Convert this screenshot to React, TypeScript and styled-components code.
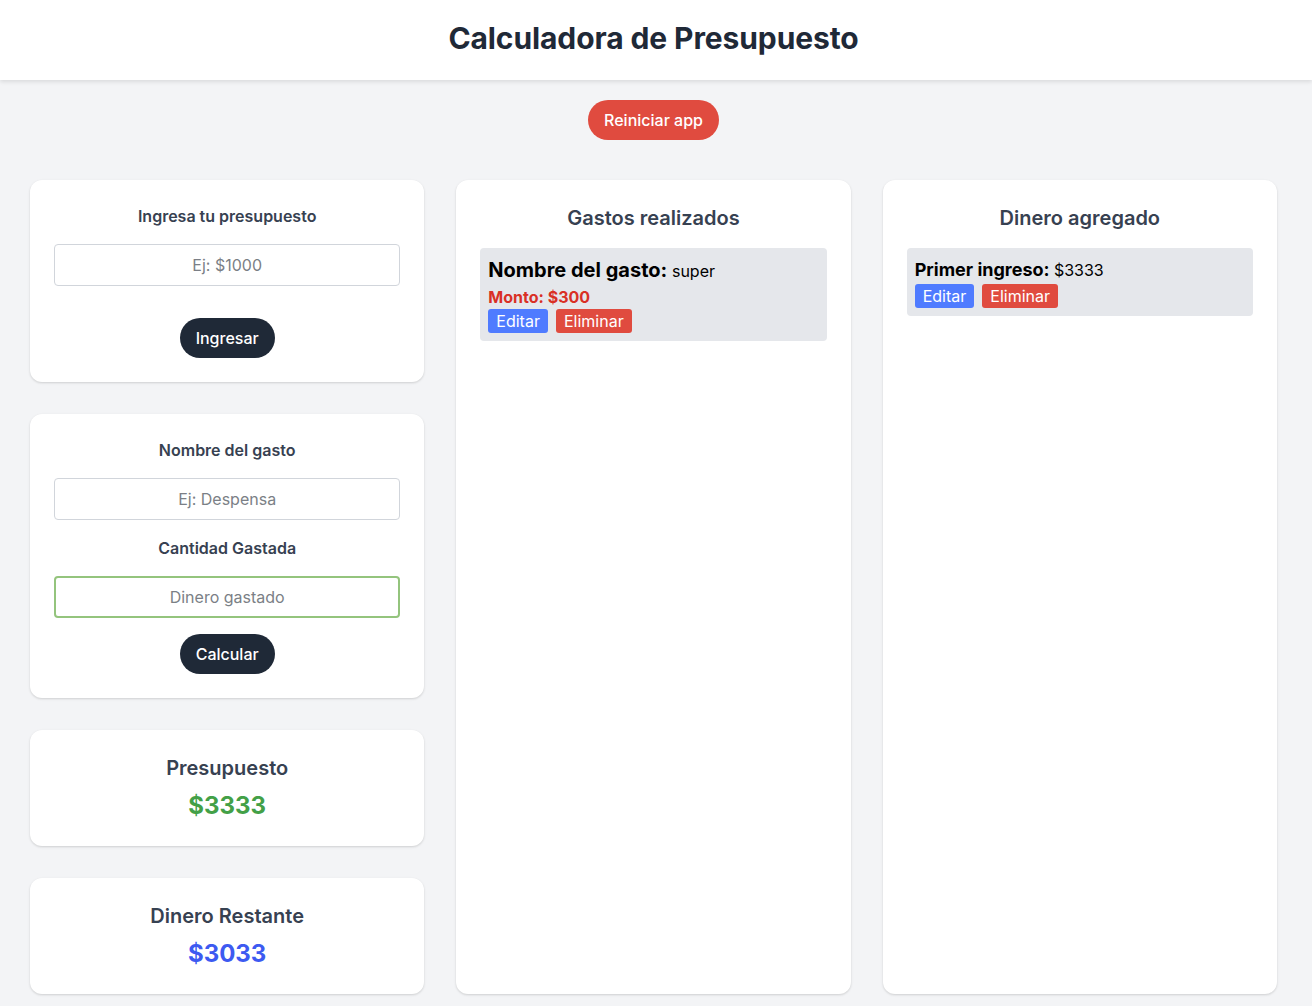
import React from "react";
import styled, { createGlobalStyle } from "styled-components";

const GlobalStyle = createGlobalStyle`
  * { box-sizing: border-box; }
  html, body { margin: 0; padding: 0; }
  body {
    background: #f3f4f6;
    font-family: Inter, "Noto Sans", Arial, sans-serif;
    color: #111827;
  }
`;

const Page = styled.div`
  min-height: 100vh;
  background: #f3f4f6;
  display: flex;
  flex-direction: column;
  align-items: center;
`;

const Header = styled.header`
  width: 100%;
  height: 80px;
  background: #ffffff;
  box-shadow: 0 2px 4px rgba(0, 0, 0, 0.1);
  display: flex;
  align-items: center;
  justify-content: center;
  padding: 0 5px 4px 0;
`;

const Title = styled.h1`
  margin: 0;
  font-size: 30px;
  line-height: 36px;
  font-weight: 700;
  color: #1f2937;
  letter-spacing: -0.1px;
`;

const ResetButton = styled.button`
  margin: 20px 5px 0 0;
  height: 40px;
  padding: 0 16px;
  border: none;
  border-radius: 9999px;
  background: #e04b3f;
  color: #ffffff;
  font-family: inherit;
  font-size: 16px;
  font-weight: 500;
  cursor: pointer;
`;

const Grid = styled.main`
  width: 100%;
  margin-top: 40px;
  padding: 0 35px 12px 30px;
  display: grid;
  grid-template-columns: repeat(3, 1fr);
  gap: 32px;
  align-items: stretch;
`;

const Column = styled.div`
  display: flex;
  flex-direction: column;
  gap: 32px;
`;

const Card = styled.section<{ $grow?: boolean }>`
  background: #ffffff;
  border-radius: 12px;
  box-shadow: 0 1px 3px rgba(0, 0, 0, 0.1), 0 1px 2px rgba(0, 0, 0, 0.06);
  padding: 24px;
  display: flex;
  flex-direction: column;
  align-items: center;
  ${(p) => (p.$grow ? "height: 100%;" : "")}
`;

const Label = styled.label<{ $mt?: number }>`
  font-size: 16px;
  line-height: 24px;
  font-weight: 600;
  color: #374151;
  margin-top: ${(p) => p.$mt ?? 0}px;
  margin-bottom: 16px;
`;

const Input = styled.input<{ $focused?: boolean }>`
  width: 100%;
  height: 42px;
  border: ${(p) => (p.$focused ? "2px solid #94c47d" : "1px solid #d1d5db")};
  border-radius: 4px;
  text-align: center;
  font-family: inherit;
  font-size: 16px;
  color: #111827;
  background: #ffffff;
  outline: none;
  &::placeholder { color: #7b7f86; }
`;

const DarkButton = styled.button<{ $mt: number }>`
  margin-top: ${(p) => p.$mt}px;
  height: 40px;
  padding: 0 16px;
  border: none;
  border-radius: 9999px;
  background: #1f2937;
  color: #ffffff;
  font-family: inherit;
  font-size: 16px;
  font-weight: 500;
`;

const SectionTitle = styled.h2`
  margin: 0;
  font-size: 20px;
  line-height: 28px;
  font-weight: 600;
  color: #374151;
`;

const Amount = styled.p<{ $color: string }>`
  margin: 8px 0 0;
  font-size: 24px;
  line-height: 32px;
  font-weight: 700;
  color: ${(p) => p.$color};
`;

const List = styled.div`
  width: 100%;
  margin-top: 16px;
  display: flex;
  flex-direction: column;
  gap: 8px;
`;

const Item = styled.div`
  width: 100%;
  background: #e5e7eb;
  border-radius: 4px;
  padding: 8px;
  color: #000000;
`;

const ItemHead = styled.p<{ $size: number }>`
  margin: 0;
  font-size: ${(p) => p.$size}px;
  line-height: 28px;
  font-weight: 700;
  span { font-weight: 400; font-size: 16px; }
`;

const ItemAmount = styled.p`
  margin: 0;
  font-size: 16px;
  line-height: 24px;
  font-weight: 700;
  color: #d93025;
`;

const Actions = styled.div`
  display: flex;
  gap: 8px;
`;

const SmallButton = styled.button<{ $bg: string }>`
  height: 24px;
  padding: 0 8px;
  border: none;
  border-radius: 3px;
  background: ${(p) => p.$bg};
  color: #ffffff;
  font-family: inherit;
  font-size: 16px;
  line-height: 24px;
`;

export default function App() {
  return (
    <Page>
      <GlobalStyle />
      <Header>
        <Title>Calculadora de Presupuesto</Title>
      </Header>
      <ResetButton>Reiniciar app</ResetButton>
      <Grid>
        <Column>
          <Card>
            <Label>Ingresa tu presupuesto</Label>
            <Input placeholder="Ej: $1000" />
            <DarkButton $mt={32}>Ingresar</DarkButton>
          </Card>
          <Card>
            <Label>Nombre del gasto</Label>
            <Input placeholder="Ej: Despensa" />
            <Label $mt={16}>Cantidad Gastada</Label>
            <Input $focused placeholder="Dinero gastado" />
            <DarkButton $mt={16}>Calcular</DarkButton>
          </Card>
          <Card>
            <SectionTitle>Presupuesto</SectionTitle>
            <Amount $color="#43a047">$3333</Amount>
          </Card>
          <Card>
            <SectionTitle>Dinero Restante</SectionTitle>
            <Amount $color="#3d5af1">$3033</Amount>
          </Card>
        </Column>
        <Card $grow>
          <SectionTitle>Gastos realizados</SectionTitle>
          <List>
            <Item>
              <ItemHead $size={20}>
                Nombre del gasto: <span>super</span>
              </ItemHead>
              <ItemAmount>Monto: $300</ItemAmount>
              <Actions>
                <SmallButton $bg="#4f7bff">Editar</SmallButton>
                <SmallButton $bg="#e04b3f">Eliminar</SmallButton>
              </Actions>
            </Item>
          </List>
        </Card>
        <Card $grow>
          <SectionTitle>Dinero agregado</SectionTitle>
          <List>
            <Item>
              <ItemHead $size={18}>
                Primer ingreso: <span>$3333</span>
              </ItemHead>
              <Actions>
                <SmallButton $bg="#4f7bff">Editar</SmallButton>
                <SmallButton $bg="#e04b3f">Eliminar</SmallButton>
              </Actions>
            </Item>
          </List>
        </Card>
      </Grid>
    </Page>
  );
}
